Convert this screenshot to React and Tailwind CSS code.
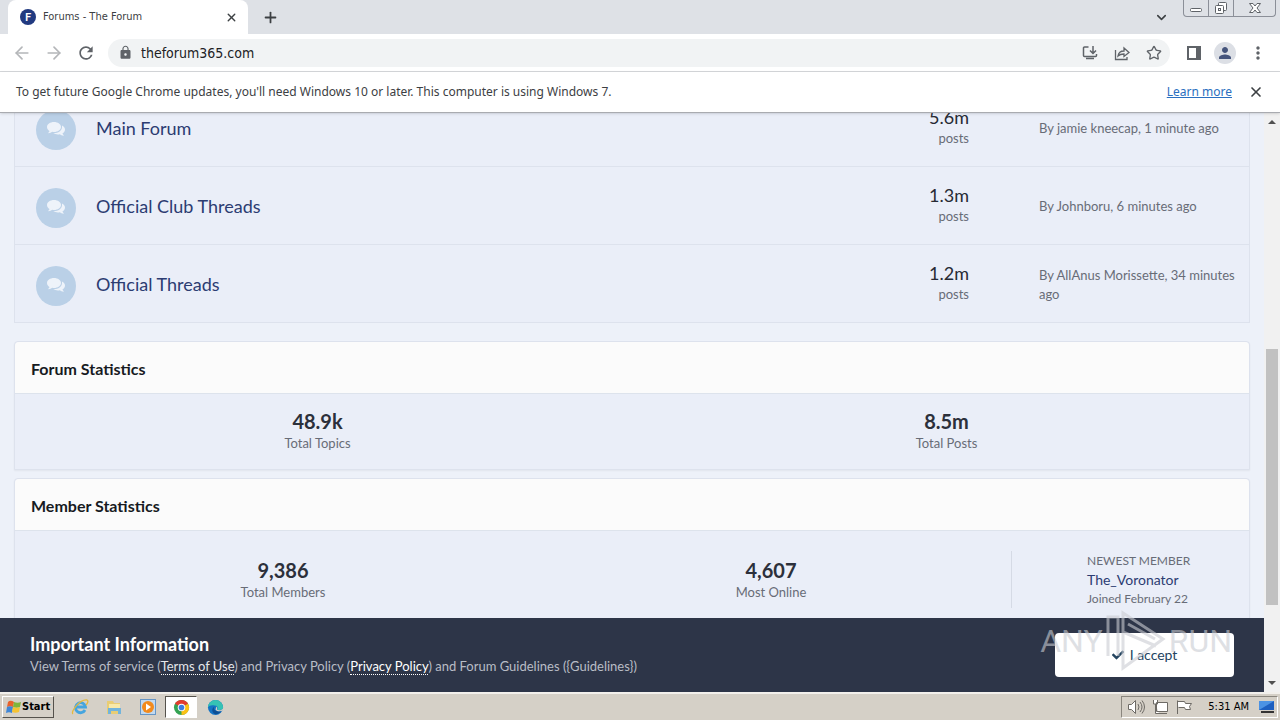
import clsx from 'clsx';
import { FaCheck } from 'react-icons/fa';
import { ArrowLeft, ArrowRight, X, Plus, ChevronDown, Star } from 'lucide-react';
import { MdRefresh, MdLock, MdMoreVert, MdPerson } from 'react-icons/md';

const FORUMS = [
  { name: 'Main Forum', posts: '5.6m', last: 'By jamie kneecap, 1 minute ago' },
  { name: 'Official Club Threads', posts: '1.3m', last: 'By Johnboru, 6 minutes ago' },
  { name: 'Official Threads', posts: '1.2m', last: 'By AllAnus Morissette, 34 minutes ago' },
];

function WindowButtons() {
  return (
    <div className="mr-1 flex h-[17px] w-[93px] self-start rounded-b border border-t-0 border-[#8b8f98] text-[#5f6368]">
      <button aria-label="Minimize" className="flex w-[25px] items-center justify-center border-r border-[#8b8f98]">
        <svg width="14" height="16" viewBox="0 0 14 16" fill="#fff" stroke="currentColor">
          <rect x="1.500" y="8.500" width="11" height="3" rx="1" />
        </svg>
      </button>
      <button aria-label="Restore" className="flex w-[25px] items-center justify-center border-r border-[#8b8f98]">
        <svg width="14" height="16" viewBox="0 0 14 16" fill="#fff" stroke="currentColor">
          <rect x="4.500" y="2.500" width="8" height="8" rx="1" />
          <rect x="1.500" y="5.500" width="8" height="8" rx="1" />
          <rect x="4.500" y="8.500" width="2" height="2" />
        </svg>
      </button>
      <button aria-label="Close window" className="flex flex-1 items-center justify-center">
        <svg width="14" height="16" viewBox="0 0 14 16" fill="#fff" stroke="currentColor">
          <path d="M1.500 3.500h3.500L7 6l2-2.500h3.500L9 8l3.500 4.500H9L7 10l-2 2.500H1.500L5 8z" />
        </svg>
      </button>
    </div>
  );
}

function TabStrip() {
  return (
    <div className="flex h-[34px] flex-shrink-0 bg-[#dee1e6]">
      <div className="ml-2 flex w-60 items-center rounded-t-lg bg-white pr-2.5 pl-3 text-[11px] text-[#3c4043]">
        <span className="flex h-4 w-4 items-center justify-center rounded-full bg-[#213a80] font-['Lato',sans-serif] text-[11px] font-bold text-white">
          F
        </span>
        <span className="ml-[7px] flex-1">Forums - The Forum</span>
        <button aria-label="Close tab">
          <X size={13} strokeWidth={2.5} />
        </button>
      </div>
      <button aria-label="New tab" className="ml-3.5 text-[#3c4043]">
        <Plus size={17} strokeWidth={2.5} />
      </button>
      <div className="flex-1" />
      <button aria-label="Search tabs" className="mr-3.5 text-[#3c4043]">
        <ChevronDown size={15} strokeWidth={2.5} />
      </button>
      <WindowButtons />
    </div>
  );
}

function Toolbar() {
  return (
    <div className="flex h-[38px] flex-shrink-0 items-center border-b border-[#d5d7da] bg-white pr-3 pl-3 text-[#5f6368]">
      <button aria-label="Back" className="text-[#b4b6b9]">
        <ArrowLeft size={20} />
      </button>
      <button aria-label="Forward" className="ml-3 text-[#b4b6b9]">
        <ArrowRight size={20} />
      </button>
      <button aria-label="Reload" className="ml-3">
        <MdRefresh size={20} />
      </button>
      <div className="ml-3 flex h-7 flex-1 items-center rounded-full bg-[#f1f3f4] pr-2 pl-2.5">
        <MdLock size={15} />
        <input
          aria-label="Address"
          defaultValue="theforum365.com"
          className="ml-2 min-w-0 flex-1 bg-transparent text-sm text-[#202124] outline-none"
        />
        <div className="flex items-center gap-4">
          <button aria-label="Install app">
            <svg width="16" height="16" viewBox="0 0 16 16" fill="none" stroke="currentColor" strokeWidth="1.5">
              <path d="M6.500 2H2.500a1 1 0 0 0-1 1v7.500a1 1 0 0 0 1 1h11a1 1 0 0 0 1-1V9M11 1v7M8 5.500l3 3 3-3M4 13.500h8" />
            </svg>
          </button>
          <button aria-label="Share">
            <svg width="16" height="16" viewBox="0 0 16 16" fill="none" stroke="currentColor" strokeWidth="1.300">
              <path d="M1.500 5v9.500H13V12M4 11c.5-3.500 2.500-5 6-5V3l5 4.500-5 4V9c-3 0-4.500.5-6 2z" />
            </svg>
          </button>
          <button aria-label="Bookmark">
            <Star size={16} />
          </button>
        </div>
      </div>
      <button aria-label="Side panel" className="ml-4">
        <svg width="16" height="14" viewBox="0 0 16 14">
          <rect x="2" y="1" width="12" height="12" fill="none" stroke="currentColor" strokeWidth="2" />
          <rect x="10" y="1" width="5" height="12" fill="currentColor" />
        </svg>
      </button>
      <button
        aria-label="Profile"
        className="ml-3 flex h-[22px] w-[22px] items-center justify-center rounded-full bg-[#dcdfe5] text-[#46557c]"
      >
        <MdPerson size={18} />
      </button>
      <button aria-label="Menu" className="ml-3">
        <MdMoreVert size={20} />
      </button>
    </div>
  );
}

function InfoBar() {
  return (
    <div className="relative z-10 flex h-[41px] flex-shrink-0 items-center border-b border-[#a9abb0] bg-white pr-4 pl-4 font-['Noto_Sans',sans-serif] text-[12px] text-[#3c4043] shadow">
      <span className="flex-1">
        To get future Google Chrome updates, you'll need Windows 10 or later. This computer is using Windows 7.
      </span>
      <a href="#learn" className="text-[#2a6fc0] underline">
        Learn more
      </a>
      <button aria-label="Dismiss" className="ml-4">
        <X size={16} strokeWidth={2.5} />
      </button>
    </div>
  );
}

function CommentsIcon() {
  return (
    <svg width="18" height="15" viewBox="0 0 18 15" fill="currentColor">
      <path d="M7 0c3.900 0 7 2.200 7 5s-3.100 5-7 5c-.6 0-1.200-.1-1.700-.2C4.200 10.600 2.900 11.100 1.500 11.300c-.3 0-.4-.3-.2-.5.6-.6 1-1.200 1.200-1.900C1 8 0 6.600 0 5c0-2.800 3.100-5 7-5z" />
      <path d="M15 3.400c1.800.9 3 2.400 3 4 0 1.600-1 3-2.500 3.900.2.700.6 1.300 1.200 1.900.2.200.1.500-.2.500-1.400-.2-2.700-.7-3.800-1.500-.5.100-1.100.2-1.700.2-1.800 0-3.500-.5-4.700-1.300C11 11.300 15 8.800 15 5z" />
    </svg>
  );
}

function ForumRow({ forum }) {
  return (
    <li className="flex h-[78px] items-center border-b border-[#dde2ed] pl-[21px]">
      <span className="mt-1 flex h-10 w-10 items-center justify-center rounded-full bg-[#bad0e7] text-[#eef3fa]">
        <CommentsIcon />
      </span>
      <a href="#forum" className="ml-5 flex-1 text-lg text-[#2c3c72]">
        {forum.name}
      </a>
      <div className="w-20 pb-0.5 text-right">
        <div className="text-lg leading-[22px] text-[#272a34]">{forum.posts}</div>
        <div className="text-[13px] leading-5 text-[#686c77]">posts</div>
      </div>
      <div className="ml-[70px] w-[210px] pt-0.5 pr-2 text-[13px] leading-[19px] text-[#686c77]">{forum.last}</div>
    </li>
  );
}

function Panel({ title, className, children }) {
  return (
    <section className={clsx('rounded-t border border-[#dde2ed] bg-[#eaeef8] shadow-xs', className)}>
      <h2 className="h-[52px] rounded-t border-b border-[#dde3ec] bg-[#fbfbfb] pl-4 text-base leading-[54px] font-bold text-[#171a22]">
        {title}
      </h2>
      {children}
    </section>
  );
}

function Stat({ value, label }) {
  return (
    <div className="flex-1 text-center">
      <div className="text-xl leading-6 font-bold text-[#2c303b]">{value}</div>
      <div className="text-[13px] leading-5 text-[#686c77]">{label}</div>
    </div>
  );
}

function Banner() {
  return (
    <div className="absolute inset-x-0 bottom-0 flex h-[74px] items-center bg-[#2d3548] pr-[30px] pl-[30px]">
      <div className="flex-1 pb-0.5">
        <h2 className="text-lg leading-6 font-bold text-white">Important Information</h2>
        <p className="text-[13px] leading-5 text-[#b9bdc6]">
          View Terms of service (
          <a href="#terms" className="border-b border-dotted border-white text-[#e6e8ec]">
            Terms of Use
          </a>
          ) and Privacy Policy (
          <a href="#privacy" className="border-b border-dotted border-white text-white">
            Privacy Policy
          </a>
          ) and Forum Guidelines ({'{Guidelines}'})
        </p>
      </div>
      <button className="flex h-11 w-[179px] items-center justify-center gap-1.5 rounded bg-white text-sm text-[#24445f]">
        <FaCheck size={12} />I accept
      </button>
      <div className="pointer-events-none absolute right-8 bottom-5 flex items-center font-['Roboto',sans-serif] text-[32px] leading-none text-[#c9ccd2]/60">
        ANY
        <svg width="66" height="62" viewBox="0 0 66 62" fill="none" stroke="currentColor" strokeWidth="3">
          <path d="M5 46V7h10v39" />
          <path d="M20 3l40 26-40 29zM25 14l27 15M20 22l33 14" />
        </svg>
        RUN
      </div>
    </div>
  );
}

function Scrollbar() {
  return (
    <div className="flex w-4 flex-shrink-0 flex-col items-center bg-[#f1f1f1] pt-1.5 pb-1.5">
      <svg width="8" height="6" viewBox="0 0 8 6" fill="#505050">
        <path d="M0 5l4-4 4 4z" />
      </svg>
      <div className="flex-[224]" />
      <div className="w-3 flex-[256] bg-[#c1c1c1]" />
      <div className="flex-[75]" />
      <svg width="8" height="6" viewBox="0 0 8 6" fill="#505050">
        <path d="M0 1l4 4 4-4z" />
      </svg>
    </div>
  );
}

function Taskbar() {
  return (
    <div className="flex h-7 flex-shrink-0 items-center border-t-2 border-[#f2f0ec] bg-[#d5d0c7] pl-0.5 text-[11px] text-black">
      <button className="flex h-[22px] w-[52px] items-center border border-t-white border-r-[#55524c] border-b-[#55524c] border-l-white px-0.5 text-[11px] font-bold">
        <svg width="17" height="16" viewBox="0 0 17 16">
          <path d="M3 3c2-2 4-1 6 0L8 8C6 7 4 7 2 8z" fill="#e8622c" />
          <path d="M9 3c2 1 5 1 7 0l-1 5c-2 1-5 1-7 0z" fill="#7fb53c" />
          <path d="M2 8c2-1 4-1 6 0l-1 6c-2-1-4-1-6 0z" fill="#3f86d6" />
          <path d="M8 8c2 1 5 1 7 0l-1 5c-2 1-5 1-7 0z" fill="#f6c332" />
        </svg>
        Start
      </button>
      <div className="ml-2.5 flex items-center">
        <button aria-label="Internet Explorer" className="flex w-8 justify-center">
          <svg width="18" height="18" viewBox="0 0 18 18" fill="none">
            <path d="M14 12a5 5 0 1 1 .5-3H5" stroke="#45a5df" strokeWidth="2.800" />
            <path d="M2 16C-1 14 9 1 16 2c2 1 0 4-1 5" stroke="#e5b93d" strokeWidth="1.300" />
          </svg>
        </button>
        <button aria-label="Explorer" className="flex w-9 justify-center">
          <svg width="18" height="18" viewBox="0 0 18 18">
            <path d="M2 3h6l1 2h6v11H2z" fill="#e9cd74" />
            <path d="M4 6h11v4H4z" fill="#f8e9a9" />
            <path d="M3 10h13v6h-3v-3H6v3H3z" fill="#72b4dc" />
          </svg>
        </button>
        <button aria-label="Media Player" className="flex w-8 justify-center">
          <svg width="18" height="18" viewBox="0 0 18 18">
            <rect x="1.500" y="1.500" width="15" height="15" fill="#c2d9ef" stroke="#6595c5" />
            <circle cx="9" cy="9" r="6" fill="#f28a1c" />
            <path d="M7 5.500l5 3.500-5 3.500z" fill="#fff" />
          </svg>
        </button>
        <button
          aria-label="Chrome"
          className="ml-px flex h-[22px] w-8 items-center justify-center border border-t-[#55524c] border-r-white border-b-white border-l-[#55524c] bg-white"
        >
          <svg width="17" height="17" viewBox="0 0 18 18">
            <circle cx="9" cy="9" r="8" fill="#34a353" />
            <path d="M9 9L2.070 5A8 8 0 0 1 15.930 5z" fill="#e33b2e" />
            <path d="M9 9l6.930-4A8 8 0 0 1 9 17z" fill="#fbc116" />
            <circle cx="9" cy="9" r="4" fill="#fff" />
            <circle cx="9" cy="9" r="3" fill="#3c7de0" />
          </svg>
        </button>
        <button aria-label="Edge" className="flex w-9 justify-center">
          <svg width="17" height="17" viewBox="0 0 18 18">
            <circle cx="9" cy="9" r="8" fill="#1573c4" />
            <path d="M1 9a8 8 0 0 1 16 0c0 3-4 3-6 2 1-2 0-4-3-4-3-1-6 0-7 2z" fill="#36c2b4" />
            <path d="M8 8c-2 3 1 6 7 5-2 3-6 4-8 2-2-2-2-5 1-7z" fill="#0e4f94" />
            <path d="M10 8c1 1 1 2 .5 3 2 1.500 5 1 6.500-1v2c-3 2-7 1-8-1z" fill="#d5d0c7" />
          </svg>
        </button>
      </div>
      <div className="flex-1" />
      <div className="mr-0.5 flex h-[22px] items-center border border-t-[#8a867e] border-r-white border-b-white border-l-[#8a867e] pr-0.5 pl-1.5">
        <svg width="66" height="16" viewBox="0 0 66 16" fill="#fff" stroke="#6d6a65">
          <path d="M.5 5.500h3l4-4v13l-4-4h-3z" />
          <path d="M10 5q2 3 0 6M12 3q4 5 0 10M14 1.500q5 6.500 0 13" fill="none" />
          <path d="M28.500 3.500h11v9h-11zM30 14.500h9M25.500 1v4h4V1M27.500 5v9.500H31" />
          <path d="M49.500 15V1.500M49.500 2.500h7l1 2h6l-2 3 1 3h-5l-1-2h-6" />
        </svg>
        <span className="mr-2.5 ml-3.5">5:31 AM</span>
        <svg width="16" height="14" viewBox="0 0 16 14">
          <path d="M0 1h15v9H0z" fill="#1d5fc0" />
          <path d="M0 10l15-9H0z" fill="#4b92e4" />
          <path d="M2 12h13" stroke="#333" strokeWidth="2" />
        </svg>
      </div>
    </div>
  );
}

export default function App() {
  return (
    <div className="flex h-screen flex-col overflow-hidden font-['DejaVu_Sans_Condensed','DejaVu_Sans',sans-serif]">
      <TabStrip />
      <Toolbar />
      <InfoBar />
      <div className="flex min-h-0 flex-1 bg-[#edf1f9] font-['Lato',sans-serif]">
        <main className="relative flex-1 overflow-hidden px-3.5">
          {/* the list is scrolled, so its first row starts above the fold */}
          <ul className="-mt-6 border-x border-[#dde2ed] bg-[#eaeef8]">
            {FORUMS.map((forum) => (
              <ForumRow key={forum.name} forum={forum} />
            ))}
          </ul>
          <Panel title="Forum Statistics" className="mt-[18px]">
            <div className="-mx-3 flex pt-[15px] pb-4">
              <Stat value="48.9k" label="Total Topics" />
              <Stat value="8.5m" label="Total Posts" />
            </div>
          </Panel>
          <Panel title="Member Statistics" className="mt-2">
            <div className="flex py-5">
              <div className="-mr-1 flex flex-1 items-center pl-6">
                <Stat value="9,386" label="Total Members" />
                <Stat value="4,607" label="Most Online" />
              </div>
              <div className="w-[238px] border-l border-[#d5dae5] pl-[75px] text-xs leading-[19px] text-[#686c77]">
                <div>NEWEST MEMBER</div>
                <a href="#member" className="block text-sm leading-[19px] text-[#2c3c72]">
                  The_Voronator
                </a>
                <div>Joined February 22</div>
              </div>
            </div>
          </Panel>
          <Banner />
        </main>
        <Scrollbar />
      </div>
      <Taskbar />
    </div>
  );
}
